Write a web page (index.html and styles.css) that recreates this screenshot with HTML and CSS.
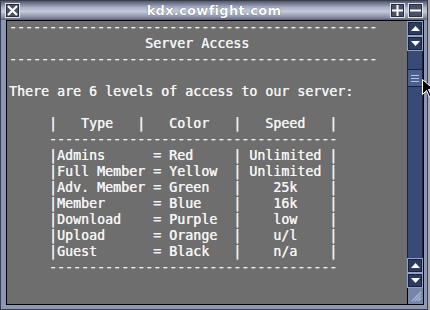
FILE: index.html
```html
<!DOCTYPE html>
<html lang="en">

<head>
    <meta charset="UTF-8">
    <title>kdx.cowfight.com</title>
    <link rel="stylesheet" href="styles.css">
</head>

<body>
    <div id="window">
        <div id="titlebar">
            <div class="tbtn" id="close">
                <svg width="11" height="11" viewBox="0 0 11 11"><path d="M1 1L10 10M10 1L1 10" stroke="#fff" stroke-width="2.2"/></svg>
            </div>
            <div id="title">kdx.cowfight.com</div>
            <div class="tbtn">
                <svg width="11" height="11" viewBox="0 0 11 11"><path d="M5.5 0V11M0 5.5H11" stroke="#fff" stroke-width="2"/></svg>
            </div>
            <div class="tbtn">
                <svg width="11" height="11" viewBox="0 0 11 11"><path d="M0 5.5H11" stroke="#fff" stroke-width="2"/></svg>
            </div>
        </div>

        <div id="frame">
            <div id="content">
<pre>----------------------------------------------
                 Server Access
----------------------------------------------

There are 6 levels of access to our server:

     |   Type   |   Color   |   Speed   |
     ------------------------------------
     |Admins      = Red     | Unlimited |
     |Full Member = Yellow  | Unlimited |
     |Adv. Member = Green   |    25k    |
     |Member      = Blue    |    16k    |
     |Download    = Purple  |    low    |
     |Upload      = Orange  |    u/l    |
     |Guest       = Black   |    n/a    |
     ------------------------------------</pre>
            </div>

            <div id="scrollbar">
                <div class="sbtn"><svg width="9" height="5" viewBox="0 0 9 5"><path d="M4.5 0L9 5H0Z" fill="#fff"/></svg></div>
                <div class="sbtn"><svg width="9" height="5" viewBox="0 0 9 5"><path d="M0 0H9L4.5 5Z" fill="#fff"/></svg></div>
                <div class="track">
                    <div class="thumb"><span></span><span></span><span></span></div>
                </div>
                <div class="sbtn"><svg width="9" height="5" viewBox="0 0 9 5"><path d="M4.5 0L9 5H0Z" fill="#fff"/></svg></div>
                <div class="sbtn"><svg width="9" height="5" viewBox="0 0 9 5"><path d="M0 0H9L4.5 5Z" fill="#fff"/></svg></div>
                <div class="grip">
                    <svg width="12" height="12" viewBox="0 0 12 12"><path d="M2 11L11 2M5 11L11 5M8 11L11 8" stroke="#a8b8d8" stroke-width="1.3"/></svg>
                </div>
            </div>
        </div>

        <svg id="cursor" width="12" height="19" viewBox="0 0 12 19"><path d="M0.5 0.5V15.5L4.5 11.5L7.5 18L9.5 17L6.5 10.5H12L0.5 0.5Z" fill="#000" stroke="#fff" stroke-width="1"/></svg>
    </div>
</body>

</html>
```

FILE: styles.css
```css
body {
    margin: 0;
    background: #a8a8a8;
}

#window {
    position: relative;
    width: 428px;
    height: 310px;
    box-sizing: border-box;
    background: #8a98b8;
    border: 1px solid #3a3e4c;
    display: flex;
    flex-direction: column;
}

#titlebar {
    height: 19px;
    display: flex;
    align-items: center;
    padding: 0 4px;
    background: linear-gradient(#50566c, #aab2c8 35%, #c4cada 55%, #8890a8 85%, #5a6078);
}

.tbtn {
    width: 13px;
    height: 13px;
    display: flex;
    align-items: center;
    justify-content: center;
    background: #4a5068;
    border: 1px solid #dfe3ee;
    box-shadow: inset 0 0 0 1px #2a2e3c;
}

.tbtn + .tbtn {
    margin-left: 3px;
}

#title {
    flex-grow: 1;
    padding-left: 18px;
    text-align: center;
    color: #fff;
    font-family: "DejaVu Sans", sans-serif;
    font-weight: bold;
    font-size: 13px;
    letter-spacing: 0.3px;
    text-shadow: 0 0 1px #303040;
}

#frame {
    flex-grow: 1;
    display: flex;
    margin: 0 3px 4px 5px;
    border: 1px solid #000;
    background: #8fa2c8;
}

#content {
    flex-grow: 1;
    background: #6e6e6e;
    overflow: hidden;
    padding-left: 2px;
}

pre {
    margin: -1px 0 0 0;
    color: #f4f4f4;
    font-family: "DejaVu Sans Mono", monospace;
    font-size: 13.3px;
    line-height: 16px;
    text-shadow: 0.3px 0 0 #f4f4f4;
}

#scrollbar {
    width: 16px;
    display: flex;
    flex-direction: column;
    background: #6e6e6e;
}

.sbtn {
    height: 13px;
    display: flex;
    align-items: center;
    justify-content: center;
    background: #2c3a60;
    border: 1px solid #8fa2c8;
    box-shadow: inset 0 0 0 1px #1a2240;
}

.track {
    flex-grow: 1;
    background: #3a4a78;
    border-left: 1px solid #1a2240;
    border-right: 1px solid #1a2240;
    padding-top: 18px;
}

.thumb {
    height: 16px;
    background: #4c5e90;
    border-top: 1px solid #1a2240;
    border-bottom: 1px solid #1a2240;
    display: flex;
    flex-direction: column;
    justify-content: center;
    align-items: center;
    gap: 2px;
}

.thumb span {
    width: 8px;
    height: 1px;
    background: #b8c4e0;
}

.grip {
    height: 16px;
    display: flex;
    align-items: center;
    justify-content: center;
    background: #7686aa;
    border-left: 1px solid #000;
}

#cursor {
    position: absolute;
    left: 421px;
    top: 78px;
}
```
